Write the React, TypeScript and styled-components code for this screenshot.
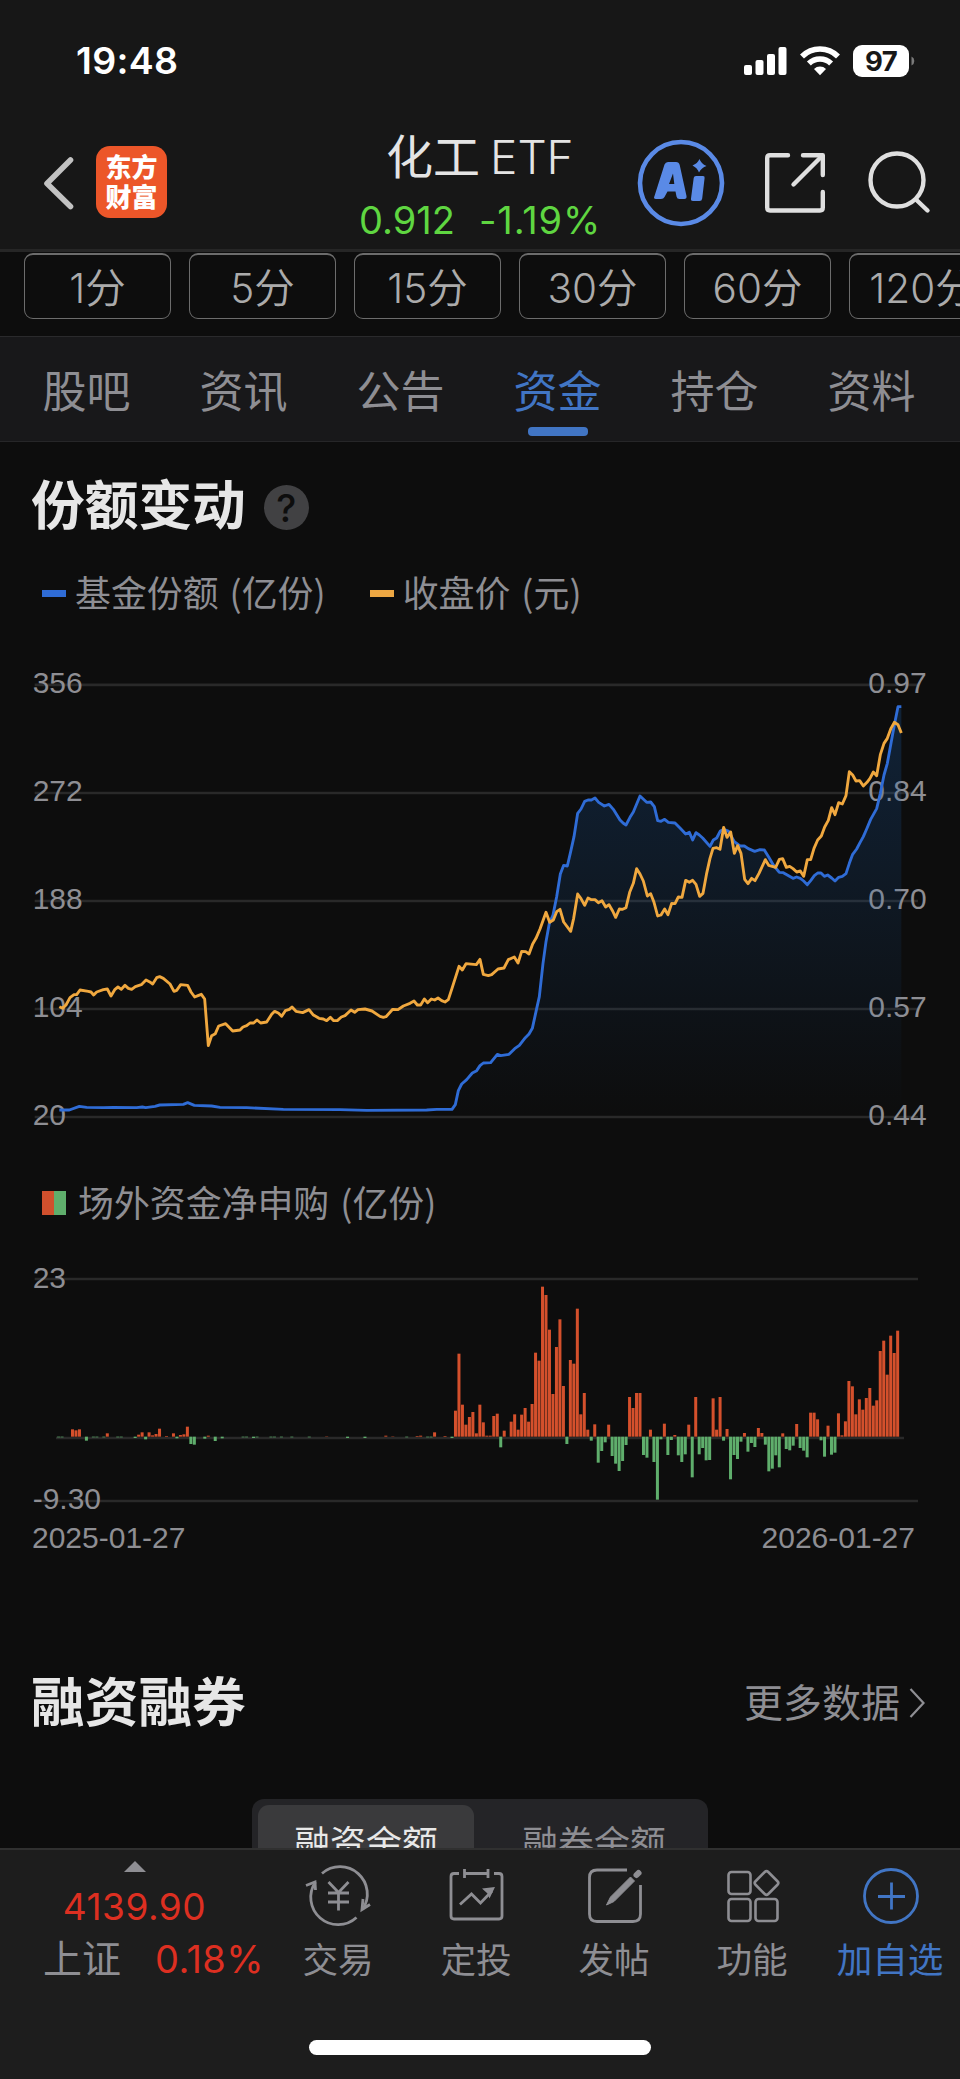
import React from "react";
import styled, { createGlobalStyle } from "styled-components";

const GlobalStyle = createGlobalStyle`
  * { box-sizing: border-box; }
  html, body { margin: 0; padding: 0; background: #0d0d0d; }
  body { font-family: Inter, "Noto Sans CJK SC", sans-serif; }
  svg { display: block; flex: none; }
`;

const GREY = "#8e8e93";
const BLUE = "#4175c4";

const Screen = styled.div`
  width: 960px;
  height: 2079px;
  display: flex;
  flex-direction: column;
  overflow: hidden;
  background: #0d0d0d;
`;

const StatusBar = styled.header`
  height: 118px;
  flex: none;
  display: flex;
  align-items: flex-start;
  justify-content: space-between;
  background: #171717;
  padding: 38px 45px 0 76px;
`;

const Clock = styled.div`
  font-size: 37.5px;
  line-height: 46px;
  font-weight: 600;
  letter-spacing: 0.3px;
  color: #fff;
`;

const StatusIcons = styled.div`
  display: flex;
  align-items: center;
  height: 46px;
`;

const Battery = styled.div`
  width: 56px;
  height: 32px;
  margin: 0 2px 0 13px;
  border-radius: 9px;
  background: #fff;
  color: #171717;
  font-size: 27.5px;
  line-height: 32px;
  font-weight: 700;
  letter-spacing: -0.6px;
  text-align: center;
`;

const NavBar = styled.nav`
  height: 134px;
  flex: none;
  display: flex;
  align-items: center;
  background: #171717;
  border-bottom: 3px solid #262626;
  padding: 0 29px 2px 42px;
`;

const Logo = styled.div`
  width: 71px;
  height: 72px;
  margin: 0 0 2px 22px;
  padding-top: 5px;
  border-radius: 14px;
  background: #ec5629;
  color: #fff;
  font-family: "Noto Sans CJK SC", sans-serif;
  font-weight: 900;
  font-size: 26px;
  line-height: 30px;
  text-align: center;
`;

const TitleBlock = styled.div`
  flex: 1;
  height: 129px;
  padding-top: 12px;
  padding-left: 192px;
`;

const Title = styled.h1`
  margin: 0 0 0 27px;
  font-size: 46px;
  line-height: 54px;
  font-weight: 300;
  color: #e4e4e4;
  white-space: nowrap;
  display: flex;
  gap: 10px;
`;

const TitleHan = styled.span`
  font-weight: 400;
  font-size: 47px;
`;

const Quote = styled.div`
  display: flex;
  gap: 24px;
  margin-top: 13px;
  font-size: 38px;
  line-height: 46px;
  font-weight: 400;
  color: #5fd641;
  white-space: nowrap;
`;

const Change = styled.span`
  letter-spacing: 0.9px;
`;

const NavActions = styled.div`
  display: flex;
  align-items: center;
`;

const Content = styled.main`
  height: 1596px;
  flex: none;
  display: flex;
  flex-direction: column;
  overflow: hidden;
  & > * { flex: none; }
`;

const Periods = styled.div`
  height: 84px;
  display: flex;
  gap: 18px;
  padding: 1px 0 0 24px;
  overflow: hidden;
`;

const Period = styled.div`
  width: 147px;
  height: 66px;
  flex: none;
  border: 1px solid #6c6c6c;
  border-top-width: 2px;
  border-radius: 9px;
  color: #ababab;
  font-size: 40.5px;
  font-weight: 350;
  line-height: 67px;
  text-align: center;
  white-space: nowrap;
`;

const Tabs = styled.div`
  height: 106px;
  display: flex;
  padding: 0 10px 0 8px;
  background: #18181a;
  border-top: 1px solid #2a2a2c;
  border-bottom: 1px solid #262628;
`;

const Tab = styled.div<{ $active?: boolean }>`
  width: 157px;
  flex: none;
  display: flex;
  flex-direction: column;
  align-items: center;
  justify-content: space-between;
  padding: 28px 0 5px;
  font-size: 44px;
  line-height: 54px;
  font-weight: 400;
  color: ${(p) => (p.$active ? BLUE : GREY)};
  &::after {
    content: "";
    width: 60px;
    height: 9px;
    border-radius: 4px;
    background: ${(p) => (p.$active ? BLUE : "transparent")};
  }
`;

const SectionHead = styled.div<{ $height: number; $top?: number }>`
  height: ${(p) => p.$height}px;
  margin-top: ${(p) => p.$top ?? 0}px;
  display: flex;
  align-items: center;
  padding: 0 34px 0 31px;
`;

const SectionTitle = styled.h2`
  margin: 0;
  font-size: 53.7px;
  line-height: 64px;
  font-weight: 700;
  color: #e6e6e6;
`;

const Help = styled.span`
  width: 45px;
  height: 45px;
  margin: 2px 0 0 18px;
  border-radius: 50%;
  background: #414143;
  color: #0d0d0d;
  font-size: 38px;
  line-height: 46px;
  font-weight: 500;
  text-align: center;
`;

const More = styled.a`
  margin-left: auto;
  display: flex;
  align-items: center;
  gap: 9px;
  font-size: 39px;
  line-height: 48px;
  font-weight: 400;
  color: ${GREY};
`;

const Legend = styled.div<{ $height: number }>`
  height: ${(p) => p.$height}px;
  display: flex;
  align-items: center;
  gap: 44px;
  padding-left: 42px;
`;

const LegendItem = styled.div`
  display: flex;
  align-items: center;
`;

const LegendText = styled.span<{ $gap?: number }>`
  margin: -5px 0 0 ${(p) => p.$gap ?? 9}px;
  font-family: "Noto Sans CJK SC", sans-serif;
  font-size: 35.9px;
  line-height: 46px;
  font-weight: 400;
  word-spacing: 3px;
  color: ${GREY};
  white-space: pre;
`;

const Dash = styled.span<{ $color: string }>`
  width: 24px;
  height: 7px;
  background: ${(p) => p.$color};
`;

const DuoSwatch = styled.span`
  width: 24px;
  height: 24px;
  background: linear-gradient(90deg, #d0502d 50%, #5fae6c 50%);
`;

const ChartBox = styled.div<{ $top?: number }>`
  margin-top: ${(p) => p.$top ?? 0}px;
`;

const Dates = styled.div`
  height: 36px;
  display: flex;
  justify-content: space-between;
  padding: 0 45px 0 32px;
  font-family: "Liberation Sans", sans-serif;
  font-size: 30px;
  line-height: 35px;
  color: ${GREY};
`;

const Segments = styled.div`
  width: 456px;
  height: 90px;
  margin: 56px 0 0 252px;
  display: flex;
  padding: 6px;
  border-radius: 12px;
  background: #242427;
`;

const Segment = styled.div<{ $active?: boolean }>`
  width: ${(p) => (p.$active ? 216 : 240)}px;
  height: 78px;
  flex: none;
  border-radius: 11px;
  background: ${(p) => (p.$active ? "#3a3a3c" : "transparent")};
  color: ${(p) => (p.$active ? "#e8e8e8" : GREY)};
  font-size: 35.9px;
  line-height: 78px;
  font-weight: 400;
  text-align: center;
`;

const BottomBar = styled.footer`
  height: 231px;
  flex: none;
  display: flex;
  flex-direction: column;
  align-items: center;
  justify-content: space-between;
  padding-bottom: 24px;
  background: #1d1d1d;
  border-top: 2px solid #303030;
`;

const BottomRow = styled.div`
  width: 960px;
  display: flex;
`;

const IndexPanel = styled.div`
  width: 269px;
  display: flex;
  flex-direction: column;
  align-items: center;
  padding-top: 11px;
  color: #dd2f21;
  font-size: 37px;
  line-height: 46px;
`;

const Caret = styled.span`
  border: 11px solid transparent;
  border-top: 0;
  border-bottom-color: ${GREY};
`;

const IndexValue = styled.div`
  margin-top: 12px;
  letter-spacing: 0.5px;
  font-weight: 400;
`;

const IndexLine = styled.div`
  display: flex;
  justify-content: space-between;
  width: 221px;
  margin-left: 38px;
  margin-top: 6px;
  font-size: 38px;
  letter-spacing: 0.4px;
  font-weight: 400;
`;

const IndexName = styled.span`
  font-size: 39px;
  letter-spacing: 0;
  color: ${GREY};
`;

const Action = styled.div<{ $active?: boolean }>`
  width: 138px;
  display: flex;
  flex-direction: column;
  align-items: center;
  padding-top: 13px;
  gap: 7px;
  font-size: 35.6px;
  line-height: 50px;
  font-weight: 400;
  white-space: nowrap;
  color: ${(p) => (p.$active ? BLUE : GREY)};
`;

const HomeIndicator = styled.div`
  width: 342px;
  height: 15px;
  border-radius: 8px;
  background: #fff;
`;

const GRID_LEFT = 104;
const GRID_RIGHT = 2754;

// Chart coordinates use three units per CSS pixel.
const sharesLine =
  "178,1410 208,1410 238,1399 260,1402 310,1403 340,1402 410,1403 427,1401 437,1403 465,1399 479,1395 550,1393 563,1388 583,1396 635,1398 660,1402 740,1403 850,1408 1020,1409 1100,1411 1280,1410 1310,1408 1356,1408 1366,1394 1375,1352 1385,1332 1400,1319 1417,1299 1430,1292 1440,1277 " +
  "1450,1269 1472,1268 1492,1243 1502,1247 1527,1243 1544,1226 1558,1216 1576,1193 1587,1182 1597,1165 1608,1115 1618,1070 1629,970 1638,905 1648,850 1659,825 1670,770 1681,702 1691,676 1702,678 1712,635 1722,590 1733,520 1743,507 1754,484 1764,480 1774,480 1785,474 1796,487 1813,498 1827,493 1840,508 1860,540 1870,550 1878,555 1890,532 1900,516 1920,468 1940,487 1952,486 1963,500 1973,542 1983,544 1994,538 2005,547 2025,549 2040,564 2057,582 2068,577 2078,600 2088,578 2098,585 2108,594 2130,619 2140,600 2150,594 2161,573 2171,568 2185,573 2203,605 2220,618 2233,618 2245,626 2264,634 2280,629 2293,630 2306,651 2320,675 2338,697 2350,698 2379,715 2390,711 2401,715 2411,723 2422,734 2432,722 2443,707 2453,699 2463,699 2473,709 2483,705 2495,714 2505,723 2516,712 2527,709 2538,701 2548,670 2558,643 2570,627 2580,608 2590,590 2600,567 2612,538 2630,506 2641,460 2652,405 2662,370 2673,310 2683,255 2694,200 2704,200";

const priceLine =
  "178,1100 188,1105 198,1095 210,1073 222,1064 230,1064 240,1050 265,1054 273,1056 281,1065 290,1056 310,1049 322,1047 333,1068 345,1048 354,1041 364,1048 375,1036 385,1045 395,1048 406,1040 424,1034 438,1020 448,1025 458,1032 470,1013 479,1010 490,1015 510,1032 522,1054 530,1051 542,1034 563,1036 573,1056 584,1071 594,1067 604,1063 614,1077 625,1217 635,1187 646,1181 656,1158 677,1151 698,1173 720,1170 729,1161 740,1157 750,1149 761,1149 771,1140 782,1149 800,1146 815,1123 824,1114 835,1119 845,1129 856,1112 868,1108 876,1101 888,1114 908,1118 927,1109 939,1124 957,1135 970,1137 980,1142 991,1132 1001,1142 1012,1142 1024,1131 1035,1127 1053,1110 1064,1117 1074,1109 1095,1107 1116,1113 1140,1129 1150,1132 1158,1130 1178,1108 1194,1109 1210,1098 1230,1090 1242,1083 1252,1095 1262,1095 1273,1077 1283,1088 1294,1077 1304,1080 1314,1074 1325,1082 1335,1086 1345,1079 1356,1045 1377,979 1387,990 1398,971 1429,974 1440,958 " +
  "1450,1003 1465,1007 1475,1004 1494,987 1512,984 1525,959 1543,951 1554,969 1565,934 1577,935 1587,942 1598,912 1608,895 1620,867 1638,817 1649,847 1660,840 1670,815 1680,808 1691,846 1712,874 1721,835 1733,762 1743,776 1754,796 1764,774 1774,779 1785,779 1795,788 1806,782 1817,801 1827,794 1838,813 1847,832 1858,807 1868,808 1878,803 1889,757 1900,730 1910,686 1920,702 1930,723 1942,768 1952,761 1962,787 1973,828 1983,825 1994,807 2004,824 2015,790 2025,791 2035,771 2046,772 2057,721 2068,727 2078,721 2088,733 2099,769 2109,760 2120,700 2130,655 2139,625 2150,623 2160,628 2171,562 2181,592 2192,576 2203,640 2213,617 2223,640 2234,718 2244,731 2255,715 2265,722 2277,700 2296,659 2306,676 2327,682 2338,658 2348,656 2359,682 2369,679 2379,686 2390,696 2401,693 2411,709 2422,659 2432,659 2442,625 2453,600 2464,588 2474,561 2485,541 2495,503 2505,524 2516,488 2527,492 2538,467 2548,395 2558,405 2568,423 2579,422 2590,438 2601,427 2610,415 2620,396 2630,407 2641,344 2652,310 2662,295 2673,265 2683,247 2694,254 2704,279";

// Quiet first months: [day index, height].
const earlyFlows: [number, number][] = [
  [0, -2], [1, -2], [4, 22], [5, 19], [6, 22], [8, -12], [10, -2], [11, -2], [13, -2], [14, 10],
  [17, -2], [18, -2], [22, -4], [23, 6], [24, 13], [25, -8], [26, 13], [27, 4], [28, 8], [29, 24],
  [31, 2], [33, 10], [34, -5], [35, 5], [36, 7], [37, 30], [38, -22], [39, -24], [42, -6], [43, 3],
  [45, -13], [47, -5], [53, -2], [54, -2], [56, -4], [57, -2], [61, -2], [62, -2], [64, -2], [67, -2],
  [72, -2], [77, 1], [83, -4], [88, -4], [94, 3], [96, 1], [100, -2], [103, 2], [104, 3], [106, -2],
  [107, -2], [108, 13], [111, 2], [113, -4],
];

// Every trading day from index 114.
const lateFlows = [
  78, 249, 96, 36, 59, 74, 10, 96, 43, 3, 3, 62, 69, -32, 18, 0, 45, 67, 21, 66, 86, 45, 98, 252,
  228, 450, 425, 321, 128, 269, 352, 152, -22, 230, 219, 384, 67, 131, 21, -12, 37, -78, -43, -17,
  36, -58, -81, -103, -73, -25, 119, 86, 131, 131, -55, -63, 21, -76, -189, -8, 39, -55, -10, 5,
  -56, -76, -53, 36, -122, 119, -53, -34, -71, -70, 115, 21, 119, -12, 23, -128, -55, -67, -15, 11,
  -45, -19, -31, 26, 11, -24, -104, -96, -56, -92, 10, -37, -41, -27, 38, -34, -42, -62, 72, 72,
  52, -11, -60, 33, -54, -48, 70, 4, 46, 167, 151, 67, 112, 81, 116, 146, 93, 109, 257, 288, 186,
  303, 251, 318,
];

const flows: [number, number][] = [
  ...earlyFlows,
  ...lateFlows.map((h, i): [number, number] => [114 + i, h]),
];

const axisText = { fontFamily: '"Liberation Sans", sans-serif', fontSize: 90, fill: GREY };

function LineChart() {
  const rows: [number, string, string][] = [
    [134.5, "356", "0.97"],
    [459, "272", "0.84"],
    [783, "188", "0.70"],
    [1107, "104", "0.57"],
    [1431, "20", "0.44"],
  ];
  return (
    <svg width="960" height="500" viewBox="0 0 2880 1500">
      <defs>
        <linearGradient id="area" x1="0" y1="200" x2="0" y2="1431" gradientUnits="userSpaceOnUse">
          <stop offset="0" stopColor="#1a5fae" stopOpacity="0.26" />
          <stop offset="1" stopColor="#1a5fae" stopOpacity="0" />
        </linearGradient>
      </defs>
      {rows.map(([y, left, right]) => (
        <g key={y}>
          <line x1={GRID_LEFT} x2={GRID_RIGHT} y1={y} y2={y} stroke="#292929" strokeWidth="8" />
          <text x="98" y={y + 23} {...axisText}>{left}</text>
          <text x="2780" y={y + 23} textAnchor="end" {...axisText}>{right}</text>
        </g>
      ))}
      <polygon points={`178,1431 ${sharesLine} 2704,1431`} fill="url(#area)" />
      <g fill="none" strokeWidth="8.6" strokeLinejoin="round">
        <polyline points={sharesLine} stroke="#2f6cd6" />
        <polyline points={priceLine} stroke="#f0a83f" />
      </g>
    </svg>
  );
}

function FlowChart() {
  return (
    <svg width="960" height="254" viewBox="0 48 2880 762">
      <g stroke="#292929" strokeWidth="8">
        <line x1={GRID_LEFT} x2={GRID_RIGHT} y1="87" y2="87" />
        <line x1="168" x2="2712" y1="564" y2="564" />
        <line x1={GRID_LEFT} x2={GRID_RIGHT} y1="753" y2="753" />
      </g>
      <text x="98" y="113" {...axisText}>23</text>
      <text x="98" y="776" {...axisText}>-9.30</text>
      {flows.map(([i, h]) => (
        <rect
          key={i}
          x={171.2 + i * 10.445}
          y={h > 0 ? 560 - h : 560}
          width="9"
          height={Math.abs(h)}
          fill={h > 0 ? "#d4502c" : "#5fae6c"}
        />
      ))}
    </svg>
  );
}

const SignalIcon = () => (
  <svg width="43" height="30" viewBox="0 0 43 30" fill="#fff">
    <rect x="0" y="19" width="8" height="10" rx="2" />
    <rect x="11.5" y="14" width="8" height="15" rx="2" />
    <rect x="23" y="8" width="8" height="21" rx="2" />
    <rect x="34.5" y="1" width="8" height="28" rx="2" />
  </svg>
);

const WifiSvg = styled.svg`
  margin-left: 13px;
`;

const WifiIcon = () => (
  <WifiSvg width="40" height="30" viewBox="0 0 40 30" fill="none" stroke="#fff" strokeWidth="5.6">
    <path d="M2 10.4 A25.5 25.5 0 0 1 38 10.4" />
    <path d="M8.9 17.6 A15.8 15.8 0 0 1 31.1 17.6" />
    <path d="M20 29.2 L14 23 A8.5 8.5 0 0 1 26 23 Z" fill="#fff" stroke="none" />
  </WifiSvg>
);

const BatteryTip = () => (
  <svg width="4" height="10" viewBox="0 0 4 10"><path d="M0.5 0.5 A5 5 0 0 1 0.5 9.5 Z" fill="#7a7a7a" /></svg>
);

const BackIcon = () => (
  <svg width="32" height="54" viewBox="0 0 32 54" fill="none" stroke="#c2c2c2" strokeWidth="5.6" strokeLinecap="round" strokeLinejoin="round">
    <path d="M28.5 4 L5 27.5 L28.5 50.5" />
  </svg>
);

const AiIcon = () => (
  <svg width="88" height="88" viewBox="0 0 88 88" fill="#5a8ae6">
    <circle cx="44" cy="44" r="41" fill="none" stroke="#5a8ae6" strokeWidth="4.6" />
    <path fillRule="evenodd" d="M31 23 H39 Q42 23 42.7 26 L49.5 57 Q50 60 47.3 60 H42.5 Q40 60 39.5 57.5 L38.5 52.5 H30.5 L27.5 58 Q26.5 60 24 60 H19 Q16 60 17.5 57 L27.5 25.5 Q28.5 23 31 23 Z M36 34.5 L32 45 H37.3 Z" />
    <path d="M59 37 H66 Q68 37 67.6 39 L65.2 59.5 Q64.9 62 62.5 62 H56 Q53.6 62 54 59.5 L56.7 39 Q57 37 59 37 Z" />
    <path d="M62.5 20 Q64 24.5 69.5 27 Q64.5 28.5 62 33.5 Q60.5 29 55.5 26.5 Q60.5 24.5 62.5 20 Z" />
  </svg>
);

const ShareSvg = styled.svg`
  margin-left: 39px;
`;

const ShareIcon = () => (
  <ShareSvg width="62" height="62" viewBox="0 0 62 62" fill="none" stroke="#dfdfdf" strokeWidth="4.4" strokeLinecap="round" strokeLinejoin="round">
    <path d="M24 3.2 H6 Q3.2 3.2 3.2 6 V55.5 Q3.2 58.5 6 58.5 H56 Q58.8 58.5 58.8 55.5 V40" />
    <path d="M39 3.2 H58.8 V23" />
    <path d="M58 4 L29.5 32.5" />
  </ShareSvg>
);

const SearchSvg = styled.svg`
  margin-left: 41px;
`;

const SearchIcon = () => (
  <SearchSvg width="64" height="64" viewBox="0 0 64 64" fill="none" stroke="#dfdfdf" strokeWidth="4.4" strokeLinecap="round">
    <circle cx="30" cy="29" r="26.5" />
    <path d="M49.5 49 L60.5 59.5" />
  </SearchSvg>
);

const MoreChevron = () => (
  <svg width="17" height="32" viewBox="0 0 17 32" fill="none" stroke={GREY} strokeWidth="2.2">
    <path d="M1.5 2 L14.5 16 L1.5 30" />
  </svg>
);

const TradeIcon = () => (
  <svg width="66" height="66" viewBox="0 0 66 66" fill="none" stroke={GREY} strokeWidth="2.8">
    <path d="M17 10.5 A27.3 27.3 0 0 1 57.5 46.5" />
    <path d="M51.5 54.5 A27.3 27.3 0 0 1 10.5 19" />
    <path d="M1 22.5 L10 19 L10.5 27 M65 41.5 L57 46.5 L58 36" />
    <path d="M23.5 19 L33.5 29.5 L43.5 19 M23 30 H44 M23 39 H44 M33.5 29.5 V47.5" />
  </svg>
);

const PlanIcon = () => (
  <svg width="66" height="66" viewBox="-1 0 66 66" fill="none" stroke={GREY} strokeWidth="2.8">
    <path d="M15 10.5 H10 Q7 10.5 7 13.5 V53 Q7 56 10 56 H55 Q58 56 58 53 V13.5 Q58 10.5 55 10.5 H50" />
    <path d="M20.5 6 V15 M20.500 10.5 H44 M44 6 V15" />
    <path d="M16 41.5 L27.5 31 L36.5 40 L48 28" />
    <path d="M38 25.5 L51 24 L45.5 35.5 L43.5 30.5 Z" fill={GREY} stroke="none" />
  </svg>
);

const PostIcon = () => (
  <svg width="66" height="66" viewBox="-1 0 66 66" fill="none" stroke={GREY} strokeWidth="2.8">
    <path d="M45 7 H15 Q7.5 7 7.5 14.5 V51 Q7.5 58.5 15 58.5 H51 Q58.5 58.500 58.5 51 V22" />
    <path d="M48.500 14 L52.5 18 L32 38.5 L24.5 42 L28.5 34 Z" fill={GREY} strokeWidth="1" />
    <path d="M54.500 12 L56.5 10" strokeWidth="6" strokeLinecap="round" />
  </svg>
);

const GridIcon = () => (
  <svg width="66" height="66" viewBox="-1 0 66 66" fill="none" stroke={GREY} strokeWidth="2.6">
    <rect x="8.5" y="9" width="22" height="22" rx="3" />
    <rect x="8.5" y="36" width="22" height="22" rx="3" />
    <rect x="35.5" y="36" width="22" height="22" rx="3" />
    <rect x="37.500" y="11" width="18" height="18" rx="2.5" transform="rotate(45 46.5 20)" />
  </svg>
);

const AddIcon = () => (
  <svg width="66" height="66" viewBox="0 0 66 66" fill="none" stroke={BLUE} strokeWidth="2.8">
    <circle cx="34" cy="33" r="26.5" />
    <path d="M34.5 19.5 V46.5 M21 33.5 H48" />
  </svg>
);

const tabs = ["股吧", "资讯", "公告", "资金", "持仓", "资料"];
const periods = ["1分", "5分", "15分", "30分", "60分", "120分"];
const actions = [
  { label: "交易", Icon: TradeIcon },
  { label: "定投", Icon: PlanIcon },
  { label: "发帖", Icon: PostIcon },
  { label: "功能", Icon: GridIcon },
  { label: "加自选", Icon: AddIcon, active: true },
];

export default function App() {
  return (
    <Screen>
      <GlobalStyle />
      <StatusBar>
        <Clock>19:48</Clock>
        <StatusIcons>
          <SignalIcon />
          <WifiIcon />
          <Battery>97</Battery>
          <BatteryTip />
        </StatusIcons>
      </StatusBar>
      <NavBar>
        <BackIcon />
        <Logo>东方<br />财富</Logo>
        <TitleBlock>
          <Title><TitleHan>化工</TitleHan><span>ETF</span></Title>
          <Quote><span>0.912</span><Change>-1.19%</Change></Quote>
        </TitleBlock>
        <NavActions>
          <AiIcon />
          <ShareIcon />
          <SearchIcon />
        </NavActions>
      </NavBar>
      <Content>
        <Periods>{periods.map((p) => <Period key={p}>{p}</Period>)}</Periods>
        <Tabs>{tabs.map((t) => <Tab key={t} $active={t === "资金"}>{t}</Tab>)}</Tabs>
        <SectionHead $height={128}>
          <SectionTitle>份额变动</SectionTitle>
          <Help>?</Help>
        </SectionHead>
        <Legend $height={47}>
          <LegendItem><Dash $color="#2f6cd6" /><LegendText>基金份额 (亿份)</LegendText></LegendItem>
          <LegendItem><Dash $color="#eda743" /><LegendText>收盘价 (元)</LegendText></LegendItem>
        </Legend>
        <ChartBox $top={23}><LineChart /></ChartBox>
        <Legend $height={126}>
          <LegendItem><DuoSwatch /><LegendText $gap={12}>场外资金净申购 (亿份)</LegendText></LegendItem>
        </Legend>
        <ChartBox><FlowChart /></ChartBox>
        <Dates><span>2025-01-27</span><span>2026-01-27</span></Dates>
        <SectionHead $height={80} $top={107}>
          <SectionTitle>融资融券</SectionTitle>
          <More>更多数据<MoreChevron /></More>
        </SectionHead>
        <Segments>
          <Segment $active>融资余额</Segment>
          <Segment>融券余额</Segment>
        </Segments>
      </Content>
      <BottomBar>
        <BottomRow>
          <IndexPanel>
            <Caret />
            <IndexValue>4139.90</IndexValue>
            <IndexLine><IndexName>上证</IndexName><span>0.18%</span></IndexLine>
          </IndexPanel>
          {actions.map(({ label, Icon, active }) => (
            <Action key={label} $active={active}><Icon />{label}</Action>
          ))}
        </BottomRow>
        <HomeIndicator />
      </BottomBar>
    </Screen>
  );
}
